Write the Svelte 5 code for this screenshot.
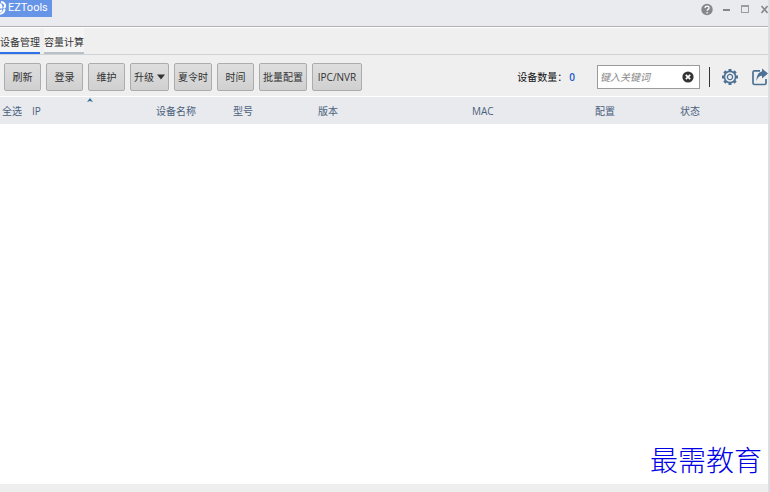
<script>
  const tabs = ["设备管理", "容量计算"];
  const actions = ["刷新", "登录", "维护", "升级", "夏令时", "时间", "批量配置", "IPC/NVR"];
  // the fixed table layout scales these up or down with the window
  const columns = [
    { label: "全选", width: 30 },
    { label: "IP", width: 124, sorted: true },
    { label: "设备名称", width: 77 },
    { label: "型号", width: 85 },
    { label: "版本", width: 154 },
    { label: "MAC", width: 123 },
    { label: "配置", width: 85 },
    { label: "状态", width: 90 }
  ];
  const teeth = [0, 45, 90, 135, 180, 225, 270, 315];

  let active = $state(0);
  let keyword = $state("");
  let count = $state(0);
</script>

<div class="window">
  <header class="titlebar">
    <div class="brand">
      <svg width="8" height="16" viewBox="8 0 8 16" aria-hidden="true">
        <path d="M5 7.5h4.5C9.5 3 4 3 4 7.5s4 4.5 6 2.5" />
        <path d="M9 2c5 1 5 5 2.5 6M12.5 9c0 4-4 5.5-8 4.5" />
      </svg>
      <span>EZTools</span>
    </div>
    <div class="controls">
      <button aria-label="帮助">
        <svg width="13" height="13" viewBox="0 0 13 13">
          <circle cx="6" cy="6.5" r="5.7" fill="#85878b" />
          <path d="M4.1 5c0-2.5 4-2.4 4 0 0 1.4-2 1.4-2 2.8M6.1 9v1.4" stroke="#fff" stroke-width="1.3" fill="none" />
        </svg>
      </button>
      <button aria-label="最小化">
        <svg width="13" height="13" viewBox="0 0 13 13">
          <path d="M3 7h7" stroke="#85878b" stroke-width="2" />
        </svg>
      </button>
      <button aria-label="最大化">
        <svg width="13" height="13" viewBox="0 0 13 13">
          <rect x="2.5" y="2.5" width="7" height="7" stroke="#9a9ca0" fill="none" />
          <path d="M2 3h8" stroke="#9a9ca0" stroke-width="2" />
        </svg>
      </button>
      <button aria-label="关闭">
        <svg width="13" height="13" viewBox="0 0 13 13">
          <path d="M3.5 3l6 7M9.5 3l-6 7" stroke="#85878b" stroke-width="1.6" />
        </svg>
      </button>
    </div>
  </header>

  <nav>
    {#each tabs as tab, i}
      <button class="tab" class:active={active === i} onclick={() => (active = i)}>
        {tab}
      </button>
    {/each}
  </nav>

  <div class="toolbar">
    {#each actions as action}
      <button class="action">
        {action}
        {#if action === "升级"}
          <svg width="8" height="6" viewBox="0 0 8 6"><path d="M0 0.5h8L4 5.5z" fill="#333" /></svg>
        {/if}
      </button>
    {/each}

    <div class="count">设备数量： <span>{count}</span></div>

    <div class="search">
      <input aria-label="关键词" placeholder="键入关键词" bind:value={keyword} />
      <button aria-label="清除" onclick={() => (keyword = "")}>
        <svg width="12" height="12" viewBox="0 0 12 12">
          <circle cx="6" cy="6" r="5.6" fill="#333" />
          <path d="M3.8 3.8l4.4 4.4M8.2 3.8L3.8 8.2" stroke="#fff" stroke-width="1.7" />
        </svg>
      </button>
    </div>

    <span class="divider"></span>

    <button class="icon" aria-label="设置">
      <svg width="16" height="18" viewBox="-8 -9 16 18">
        {#each teeth as angle}
          <rect x="-1.5" y="-8" width="3" height="2.5" fill="#4d7095" transform="rotate({angle})" />
        {/each}
        <circle r="5.6" fill="none" stroke="#4d7095" stroke-width="1.6" />
        <circle r="2.6" fill="none" stroke="#4d7095" stroke-width="1.3" />
      </svg>
    </button>
    <button class="icon" aria-label="导出">
      <svg width="16" height="18" viewBox="0 0 16 18">
        <path d="M8 2.8H2.5q-1.5 0-1.5 1.5v10.7q0 1.5 1.5 1.5h10q1.5 0 1.5-1.5V11" fill="none" stroke="#4d7095" stroke-width="1.7" />
        <path d="M10 0.5L16 5.5l-6 5V7.8C7.5 7.8 5.5 9.5 4.5 13c0-5.5 2-9 5.5-9.5z" fill="#4d7095" />
      </svg>
    </button>
  </div>

  <main>
    <table>
      <thead>
        <tr>
          {#each columns as col}
            <th style="width: {col.width}px">
              {col.label}
              {#if col.sorted}
                <svg class="sort" width="6" height="4" viewBox="0 0 6 4">
                  <path d="M0 4L3 0l3 4L3 3z" fill="#2f6f96" />
                </svg>
              {/if}
            </th>
          {/each}
        </tr>
      </thead>
    </table>
    <p class="mark">最需教育</p>
  </main>

  <footer></footer>
</div>

<style>
  :global(body) {
    margin: 0;
  }

  .window {
    display: flex;
    flex-direction: column;
    box-sizing: border-box;
    min-height: 100vh;
    border-right: 2px solid #dcdde0;
    background: #efefef;
    color: #333;
    font-family: "Open Sans", "Noto Sans CJK SC", sans-serif;
    font-size: 10px;
    line-height: 16px;
    overflow: hidden;
  }

  button,
  input {
    margin: 0;
    padding: 0;
    border: 0;
    background: none;
    color: inherit;
    font: inherit;
  }

  svg {
    display: block;
    flex: none;
  }

  .titlebar {
    display: flex;
    justify-content: space-between;
    align-items: flex-start;
    height: 26px;
    border-bottom: 1px solid #b0b0b0;
    background: #eaebef;
  }

  .brand {
    display: flex;
    height: 17px;
    padding-right: 4px;
    background: #6694e6;
    color: #fff;
    font-family: Roboto, sans-serif;
    font-size: 11px;
  }

  .brand svg {
    fill: none;
    stroke: #fff;
    stroke-width: 2;
  }

  .controls {
    display: flex;
    gap: 6px;
    margin-right: -3px;
    padding-top: 3px;
  }

  nav {
    display: flex;
    gap: 4px;
    height: 26px;
    border-top: 1px solid #fff;
    border-bottom: 1px solid #cfd3d5;
  }

  .tab {
    padding-top: 3px;
    border-bottom: 2px solid #b9c1c8;
    background: #f4f4f4;
  }

  .tab.active {
    border-color: #2f72ea;
  }

  .toolbar {
    display: flex;
    align-items: center;
    gap: 5px;
    box-sizing: border-box;
    height: 42px;
    padding: 2px 0 0 4px;
    border-bottom: 1px solid #fff;
    white-space: nowrap;
  }

  .action {
    display: flex;
    justify-content: center;
    align-items: center;
    gap: 3px;
    box-sizing: border-box;
    min-width: 37px;
    height: 28px;
    padding: 0 3px;
    border: 1px solid #a9adb0;
    border-radius: 2px;
    background: linear-gradient(#dedede, #d0d0d0);
  }

  .action:nth-of-type(8) {
    min-width: 50px;
  }

  .count {
    display: flex;
    gap: 2px;
    margin-left: auto;
    margin-right: 17px;
    color: #111;
  }

  .count span {
    color: #1b55cf;
    font-weight: 600;
  }

  .search {
    display: flex;
    align-items: center;
    box-sizing: border-box;
    width: 103px;
    height: 24px;
    padding: 0 5px 0 2px;
    border: 1px solid #999b9e;
    background: #fff;
  }

  .search input {
    flex: 1;
    min-width: 0;
    outline: 0;
  }

  .search input::placeholder {
    color: #888;
    font-style: italic;
  }

  .divider {
    width: 1px;
    height: 20px;
    margin: 0 7px 0 4px;
    background: #333;
  }

  .icon + .icon {
    margin-left: 9px;
  }

  main {
    display: flex;
    flex: 1;
    flex-direction: column;
    justify-content: space-between;
    background: #fff;
  }

  table {
    width: 100%;
    table-layout: fixed;
    border-collapse: collapse;
    background: #e9eaee;
  }

  th {
    position: relative;
    box-sizing: border-box;
    height: 27px;
    padding: 0 0 0 2px;
    color: #49617d;
    font-weight: normal;
    text-align: left;
  }

  .sort {
    position: absolute;
    top: 1px;
    left: 46%;
  }

  .mark {
    margin: 0 6px 7px;
    color: #0000e6;
    font-family: KaiTi, "Noto Sans CJK SC", serif;
    font-size: 28px;
    font-weight: 300;
    line-height: 36px;
    text-align: right;
  }

  footer {
    height: 8px;
    background: #eee;
  }
</style>
